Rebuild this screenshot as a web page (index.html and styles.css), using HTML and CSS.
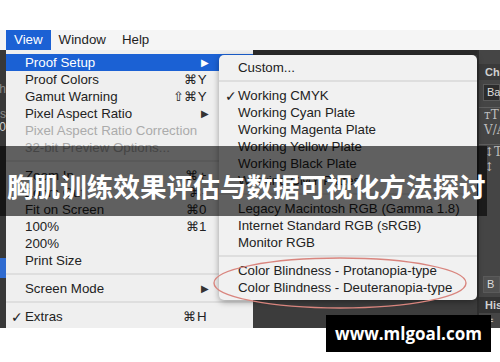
FILE: index.html
```html
<!DOCTYPE html>
<html>
<head>
 <meta charset="utf-8">
 <title>胸肌训练效果评估与数据可视化方法探讨</title>
 <link rel="stylesheet" href="styles.css">
</head>
<body>
<div class="Page">
 <div class="Shot">
  <div class="MenuBar">
   <span class="MenuTitle MenuTitleOn">View</span>
   <span class="MenuTitle">Window</span>
   <span class="MenuTitle">Help</span>
  </div>
  <div class="Desk">
   <div class="Edge">
    <span class="EdgeText">th</span>
    <span class="EdgeText EdgeTextB">os</span>
    <span class="EdgeText EdgeTextC">0</span>
    <span class="EdgeBlue"></span>
   </div>
   <div class="Menu">
    <div class="Row RowOn"><span class="Label">Proof Setup</span><span class="Arrow">&#9654;</span></div>
    <div class="Row"><span class="Label">Proof Colors</span><span class="Key">&#8984;Y</span></div>
    <div class="Row"><span class="Label">Gamut Warning</span><span class="Key">&#8679;&#8984;Y</span></div>
    <div class="Row"><span class="Label">Pixel Aspect Ratio</span><span class="Arrow">&#9654;</span></div>
    <div class="Row RowOff"><span class="Label">Pixel Aspect Ratio Correction</span></div>
    <div class="Row RowOff"><span class="Label">32-bit Preview Options...</span></div>
    <div class="Sep"></div>
    <div class="Row"><span class="Label">Zoom In</span><span class="Key">&#8984;+</span></div>
    <div class="Row"><span class="Label">Zoom Out</span><span class="Key">&#8984;-</span></div>
    <div class="Row"><span class="Label">Fit on Screen</span><span class="Key">&#8984;0</span></div>
    <div class="Row"><span class="Label">100%</span><span class="Key">&#8984;1</span></div>
    <div class="Row"><span class="Label">200%</span></div>
    <div class="Row"><span class="Label">Print Size</span></div>
    <div class="Sep"></div>
    <div class="Row"><span class="Label">Screen Mode</span><span class="Arrow">&#9654;</span></div>
    <div class="Sep"></div>
    <div class="Row"><span class="Check">&#10003;</span><span class="Label">Extras</span><span class="Key">&#8984;H</span></div>
    <div class="Row"><span class="Label">Show</span></div>
   </div>
   <div class="Canvas">
    <div class="TabBar"></div>
   </div>
   <div class="Panel">
    <div class="PanelHead">Cha</div>
    <div class="PanelBox">Ba</div>
    <div class="PanelLine"></div>
    <div class="PanelGlyph">&#7451;T</div>
    <div class="PanelGlyph">V/A</div>
    <div class="PanelLine"></div>
    <div class="PanelGlyph">&#8597;T</div>
    <div class="PanelGlyph">&#8597;</div>
    <div class="PanelFill"></div>
    <div class="PanelBox PanelBoxB">B</div>
    <div class="PanelHead PanelHeadB">His</div>
    <div class="PanelGlyph">&#8784;</div>
   </div>

   <div class="SubMenu">
    <div class="Row"><span class="Label">Custom...</span></div>
    <div class="Sep"></div>
    <div class="Row"><span class="Check">&#10003;</span><span class="Label">Working CMYK</span></div>
    <div class="Row"><span class="Label">Working Cyan Plate</span></div>
    <div class="Row"><span class="Label">Working Magenta Plate</span></div>
    <div class="Row"><span class="Label">Working Yellow Plate</span></div>
    <div class="Row"><span class="Label">Working Black Plate</span></div>
    <div class="Row"><span class="Label">Working CMY Plates</span></div>
    <div class="Sep"></div>
    <div class="Row"><span class="Label">Legacy Macintosh RGB (Gamma 1.8)</span></div>
    <div class="Row"><span class="Label">Internet Standard RGB (sRGB)</span></div>
    <div class="Row"><span class="Label">Monitor RGB</span></div>
    <div class="Sep"></div>
    <div class="Row"><span class="Label">Color Blindness - Protanopia-type</span></div>
    <div class="Row"><span class="Label">Color Blindness - Deuteranopia-type</span></div>
   </div>

   <!-- hand drawn mark round the colour blindness items -->
   <svg class="Ring" width="262" height="56" viewBox="0 0 262 56">
    <ellipse cx="131" cy="28" rx="126" ry="25" fill="none" stroke="#d9857e" stroke-width="1.4"/>
   </svg>
  </div>
 </div>

 <div class="Banner"><span>胸肌训练效果评估与数据可视化方法探讨</span></div>
 <div class="Stamp">www.mlgoal.com</div>
</div>
</body>
</html>
```

FILE: styles.css
```css
body {
 margin:0;
 background:#ffffff;
 font-family:"Liberation Sans", Arial, sans-serif;
}

.Page {
 position:relative;
 width:500px;
 height:362px;
 padding-top:30px;
 box-sizing:border-box;
 overflow:hidden;
}
.Shot {
 height:298px;
 display:flex;
 flex-direction:column;
}

/* Menu bar */
.MenuBar {
 height:20px;
 display:flex;
 align-items:center;
 padding-left:6px;
 background:#f5f5f5;
 font-size:13.3px;
 color:#1e1e1e;
}
.MenuTitle {
 height:20px;
 line-height:20px;
 padding:0 8px;
}
.MenuTitleOn {
 background:#1b61d4;
 color:#ffffff;
}

/* Workspace */
.Desk {
 position:relative;
 flex:1;
 display:flex;
 overflow:hidden;
 background:#3c3c3c;
}
.Edge {
 position:relative;
 width:6px;
 background:#383838;
 overflow:hidden;
}
.EdgeText {
 position:absolute;
 right:0;
 top:32px;
 font-size:12px;
 color:#8a8a8a;
}
.EdgeTextB { top:57px; }
.EdgeTextC { top:70px; color:#cfcfcf; }
.EdgeBlue {
 position:absolute;
 left:0;
 right:0;
 top:208px;
 height:20px;
 background:#2f6bd0;
}

.Menu {
 width:247px;
 padding-top:4px;
 box-sizing:border-box;
 background:#efefef;
 font-size:13.3px;
 color:#222222;
}
.Row {
 position:relative;
 display:flex;
 align-items:center;
 height:17px;
 padding:0 46px 0 19px;
 white-space:nowrap;
}
.Label {
 flex:1;
}
.Key {
 letter-spacing:0.5px;
}
.Arrow {
 font-size:10px;
 margin-right:-2px;
 color:#333333;
}
.Check {
 position:absolute;
 left:5px;
 font-family:"DejaVu Sans", sans-serif;
 font-size:14px;
 font-weight:bold;
}
.RowOn {
 background:#1b61d4;
 color:#ffffff;
}
.RowOn .Arrow { color:#ffffff; }
.RowOff {
 color:#ababab;
}
.Sep {
 height:11px;
 position:relative;
}
.Sep:after {
 content:"";
 position:absolute;
 left:0;
 right:0;
 top:4px;
 height:2px;
 background:#dedede;
}

.Canvas {
 flex:1;
 background:#3c3c3c;
}
.TabBar {
 height:5px;
 background:#2a2a2a;
}

.Panel {
 width:21px;
 display:flex;
 flex-direction:column;
 background:#454545;
 border-left:2px solid #2e2e2e;
 font-size:11px;
 color:#d0d0d0;
 overflow:hidden;
 white-space:nowrap;
}
.PanelHead {
 margin-top:14px;
 height:16px;
 line-height:16px;
 padding-left:6px;
 font-weight:bold;
 background:#3a3a3a;
}
.PanelBox {
 margin:4px 0 0 4px;
 height:15px;
 line-height:15px;
 padding-left:3px;
 background:#2c2c2c;
 border:1px solid #5a5a5a;
 color:#dddddd;
}
.PanelLine {
 margin-top:6px;
 height:1px;
 background:#5e5e5e;
}
.PanelGlyph {
 padding-left:5px;
 height:15px;
 line-height:15px;
 font-family:"DejaVu Serif", serif;
 font-size:12px;
 color:#bdbdbd;
}
.PanelFill {
 flex:1;
}
.PanelBoxB {
 margin-bottom:4px;
 background:#505050;
}
.PanelHeadB {
 margin-top:0;
 background:#333333;
}

/* Submenu sits over the parent menu */
.SubMenu {
 position:absolute;
 left:219px;
 top:5px;
 width:258px;
 padding:4px 0;
 background:#f1f1f1;
 border-radius:5px;
 box-shadow:0 2px 6px rgba(0,0,0,0.35);
 font-size:13.3px;
 color:#222222;
}
.SubMenu .Row {
 padding:0 10px 0 19px;
}
.SubMenu .Check {
 left:6px;
}

.Ring {
 position:absolute;
 left:209px;
 top:205px;
}

/* Caption strip and site stamp */
.Banner {
 position:absolute;
 left:0;
 top:146px;
 width:487px;
 height:70px;
 box-sizing:border-box;
 padding:8px 0 0 7px;
 display:flex;
 align-items:center;
 background:rgba(0,0,0,0.6);
 font-family:"Noto Sans CJK SC", "Noto Sans", sans-serif;
 font-weight:bold;
 font-size:26.6px;
 color:#ffffff;
 white-space:nowrap;
}
.Stamp {
 position:absolute;
 left:326px;
 top:315px;
 width:165px;
 height:37px;
 display:flex;
 align-items:center;
 justify-content:center;
 background:#000000;
 font-family:"Open Sans", "DejaVu Sans", sans-serif;
 font-weight:bold;
 font-size:17px;
 color:#ffffff;
}
```
